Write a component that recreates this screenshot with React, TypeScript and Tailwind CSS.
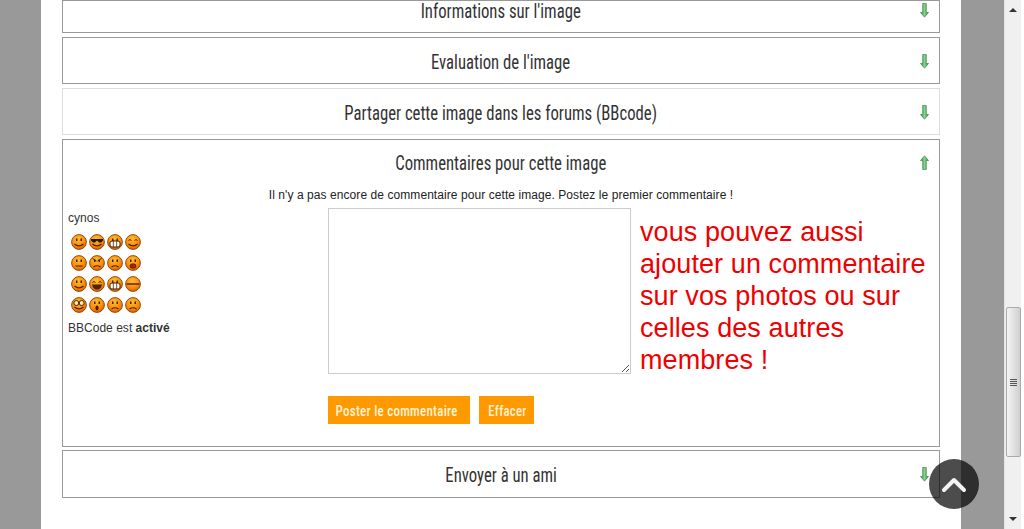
const narrow = "font-['Roboto_Condensed','Liberation_Sans_Narrow','Liberation_Sans',sans-serif]";

function Arrow({ up = false }: { up?: boolean }) {
  return (
    <svg width="9" height="15" viewBox="0 0 9 15" className={up ? 'rotate-180' : ''}>
      <defs>
        <linearGradient id="arrowFill" x1="0" y1="0" x2="1" y2="0">
          <stop offset="0%" stopColor="#2f8a40" />
          <stop offset="50%" stopColor="#86d48c" />
          <stop offset="100%" stopColor="#2f8a40" />
        </linearGradient>
      </defs>
      <path d="M2.7 0.5h3.6V9.5h2.2L4.5 14.2 0.5 9.5h2.2z" fill="url(#arrowFill)" stroke="#2f7a3e" strokeWidth="0.6" />
    </svg>
  );
}

function Title({ text }: { text: string }) {
  return (
    <span className={`inline-block whitespace-nowrap scale-x-[0.795] text-[21px] leading-[28px] text-[#333333] ${narrow}`}>
      {text}
    </span>
  );
}

function Bar({ title, light = false, h = 'h-[47px]', pad = 'pt-[2px]', arrow = 'top-[16px]', extra = '' }: { title: string; light?: boolean; h?: string; pad?: string; arrow?: string; extra?: string }) {
  return (
    <div className={`${h} ${extra} flex items-center justify-center relative border ${light ? 'border-[#dddddd]' : 'border-[#999999]'} ${pad}`}>
      <Title text={title} />
      <div className={`absolute right-[10px] flex ${arrow}`}>
        <Arrow />
      </div>
    </div>
  );
}

type Face = 'smile' | 'cool' | 'grin' | 'wink' | 'flat' | 'angry' | 'sad' | 'tongue' | 'big' | 'laugh' | 'line' | 'eyes' | 'oh' | 'worry';

function Smiley({ face }: { face: Face }) {
  const dark = '#4a2200';
  const dots = face !== 'cool' && face !== 'eyes' && face !== 'line' && face !== 'laugh' && face !== 'wink';
  return (
    <svg width="16" height="16" viewBox="0 0 16 16">
      <defs>
        <radialGradient id="sm" cx="45%" cy="30%" r="75%">
          <stop offset="0%" stopColor="#ffc02a" />
          <stop offset="60%" stopColor="#fb8a0e" />
          <stop offset="100%" stopColor="#d65a00" />
        </radialGradient>
      </defs>
      <circle cx="8" cy="8" r="7.4" fill="url(#sm)" stroke="#8a4200" strokeWidth="0.9" />
      {dots && (
        <>
          <rect x="5" y="4.5" width="1.5" height="2.5" fill={dark} />
          <rect x="9.5" y="4.5" width="1.5" height="2.5" fill={dark} />
        </>
      )}
      {(face === 'wink' || face === 'laugh') && (
        <path d="M3.5 6.5q1.5-2 3 0M9.5 6.5q1.5-2 3 0" fill="none" stroke={dark} strokeWidth="1" />
      )}
      {face === 'cool' && <path d="M2 5h12v1.5L12 8.5H10L8 6.5 6 8.5H4L2 6.5z" fill="#1a1a1a" />}
      {face === 'eyes' && (
        <>
          <circle cx="5.3" cy="6" r="2.5" fill="#ffe9b0" stroke={dark} strokeWidth="1" />
          <circle cx="10.7" cy="6" r="2.5" fill="#ffe9b0" stroke={dark} strokeWidth="1" />
        </>
      )}
      {face === 'angry' && <path d="M3.5 3.5l4 2.5M12.5 3.5l-4 2.5" stroke={dark} strokeWidth="1" />}
      {(face === 'smile' || face === 'cool' || face === 'wink' || face === 'eyes' || face === 'big') && (
        <path d="M3.5 10q4.5 3.8 9 0" fill="none" stroke={dark} strokeWidth="1.1" />
      )}
      {face === 'grin' && (
        <>
          <rect x="3" y="7" width="10" height="6" rx="2" fill="#fff" stroke={dark} strokeWidth="1" />
          <path d="M6.3 7v6M9.7 7v6" stroke={dark} strokeWidth="0.8" />
        </>
      )}
      {face === 'laugh' && <path d="M3 8.5h10q-1 5-5 5t-5-5z" fill={dark} />}
      {face === 'flat' && <path d="M4.5 11h7" stroke={dark} strokeWidth="1.1" />}
      {face === 'line' && <path d="M1.5 8h13" stroke={dark} strokeWidth="1.4" />}
      {(face === 'sad' || face === 'angry' || face === 'worry') && (
        <path d="M4.5 12q3.5-2.6 7 0" fill="none" stroke={dark} strokeWidth="1.1" />
      )}
      {face === 'tongue' && <ellipse cx="8" cy="11" rx="3" ry="2.2" fill="#a8240a" stroke={dark} strokeWidth="0.8" />}
      {face === 'oh' && <ellipse cx="8" cy="11" rx="1.6" ry="2.4" fill="#5a1500" />}
    </svg>
  );
}

const faces: Face[] = ['smile', 'cool', 'grin', 'wink', 'flat', 'angry', 'sad', 'tongue', 'big', 'laugh', 'grin', 'line', 'eyes', 'oh', 'sad', 'worry'];

export default function App() {
  return (
    <div className="h-[529px] overflow-hidden flex bg-white font-['Liberation_Sans',sans-serif]">
      <div className="w-[1004px] h-full bg-[#999999] px-[41px] shrink-0 relative">
        <div className="w-[920px] h-full bg-white px-[21px] flex flex-col gap-[4px]">
          <Bar title="Informations sur l'image" h="h-[33px]" pad="pb-[12px]" arrow="top-[2px]" />
          <Bar title="Evaluation de l'image" />
          <Bar title="Partager cette image dans les forums (BBcode)" light />
          <div className="h-[308px] border border-[#999999] relative flex flex-col">
            <div className="text-center mt-[9px] h-[28px]"><Title text="Commentaires pour cette image" /></div>
            <div className="absolute right-[10px] top-[15px] flex"><Arrow up /></div>
            <div className="text-center text-[12px] leading-[14px] tracking-[0.07px] text-[#222222] mt-[11px]">
              Il n'y a pas encore de commentaire pour cette image. Postez le premier commentaire !
            </div>
            <div className="flex mt-[6px] pl-[5px]">
              <div className="w-[260px] text-[12px] tracking-[0.02px] text-[#333333] pt-[3px]">
                <div className="leading-[14px]">cynos</div>
                <div className="grid grid-cols-[repeat(4,16px)] gap-x-[2px] gap-y-[5px] ml-[3px] mt-[9px]">
                  {faces.map((f, i) => <Smiley key={i} face={f} />)}
                </div>
                <div className="mt-[8px] leading-[14px]">BBCode est <b>activé</b></div>
              </div>
              <div className="w-[303px]">
                <div className="h-[166px] border border-[#cccccc] relative">
                  <svg width="9" height="9" viewBox="0 0 9 9" className="absolute right-0 bottom-0">
                    <path d="M1 8l7-7M5 8l3-3" stroke="#555" strokeWidth="1" />
                  </svg>
                </div>
                <div className={`flex gap-[9px] mt-[22px] text-[15px] leading-[28px] text-[#fff3d6] font-medium ${narrow}`}>
                  <div className="w-[142px] h-[28px] bg-[#ff9900] flex justify-center pr-[4px] pt-px"><span className="inline-block whitespace-nowrap scale-x-[0.865] tracking-[0.3px]">Poster le commentaire</span></div>
                  <div className="w-[55px] h-[28px] bg-[#ff9900] flex justify-center pl-[1px] pt-px"><span className="inline-block whitespace-nowrap scale-x-[0.85] tracking-[0.3px]">Effacer</span></div>
                </div>
              </div>
              <div className="ml-[9px] w-[295px] text-[#ee0000] text-[27px] tracking-[0.09px] leading-[32px] pt-[8px]">
                vous pouvez aussi ajouter un commentaire sur vos photos ou sur celles des autres membres !
              </div>
            </div>
          </div>
          <Bar title="Envoyer à un ami" h="h-[48px]" extra="-mt-px" />
        </div>
        <div className="absolute left-[929px] top-[459px] w-[50px] h-[50px] rounded-full bg-black/70 flex items-center justify-center">
          <svg width="26" height="17" viewBox="0 0 26 17">
            <path d="M3 14L13 4l10 10" fill="none" stroke="#f4f4f4" strokeWidth="4" strokeLinecap="round" strokeLinejoin="round" />
          </svg>
        </div>
      </div>
      <div className="w-[17px] h-full bg-[#f0f0f0] border-l border-[#e4e4e4] flex flex-col items-center relative">
        <div className="mt-[8px] w-0 h-0 border-x-[4px] border-x-transparent border-b-[4px] border-b-[#333333]" />
        <div className="absolute left-[1px] top-[307px] w-[15px] h-[150px] border border-[#a9a9a9] rounded-[2px] bg-gradient-to-r from-[#f4f4f4] to-[#cfcfcf] flex flex-col items-center justify-center gap-px">
          <div className="w-[7px] h-px bg-[#555555]" />
          <div className="w-[7px] h-px bg-[#555555]" />
          <div className="w-[7px] h-px bg-[#555555]" />
          <div className="w-[7px] h-px bg-[#555555]" />
        </div>
        <div className="absolute bottom-[8px] w-0 h-0 border-x-[4px] border-x-transparent border-t-[4px] border-t-[#333333]" />
      </div>
      <div className="flex-1 bg-white" />
    </div>
  );
}
